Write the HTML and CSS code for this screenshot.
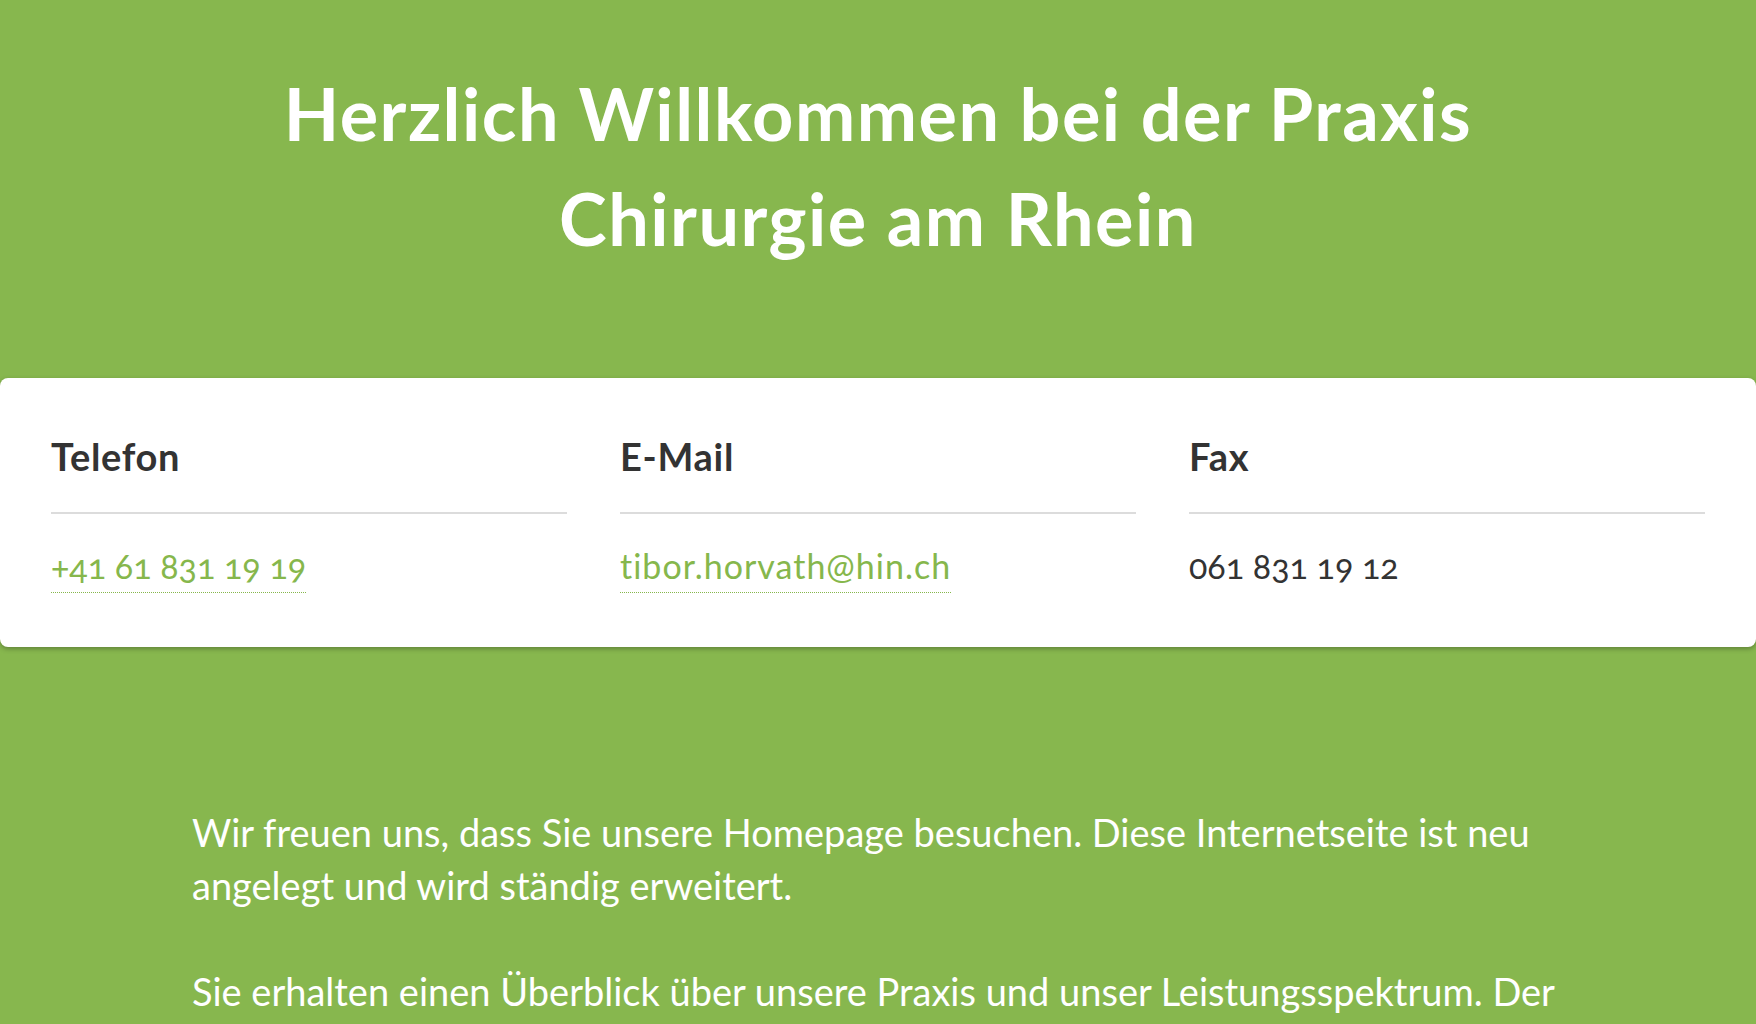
FILE: index.html
```html
<!DOCTYPE html>
<html lang="de">
<head>
<meta charset="utf-8">
<title>Praxis Chirurgie am Rhein</title>
<link rel="stylesheet" href="styles.css">
</head>
<body>
<main class="page">
  <header class="hero">
    <h1 class="hero-title">Herzlich Willkommen bei der Praxis<br>Chirurgie am Rhein</h1>
  </header>

  <section class="contact-card">
    <div class="contact-col">
      <h2 class="contact-label">Telefon</h2>
      <p class="contact-value"><a class="contact-link" href="#">+41 61 831 19 19</a></p>
    </div>
    <div class="contact-col">
      <h2 class="contact-label">E-Mail</h2>
      <p class="contact-value"><a class="contact-link contact-mail" href="#">tibor.horvath@hin.ch</a></p>
    </div>
    <div class="contact-col">
      <h2 class="contact-label">Fax</h2>
      <p class="contact-value">061 831 19 12</p>
    </div>
  </section>

  <section class="intro">
    <p>Wir freuen uns, dass Sie unsere Homepage besuchen. Diese Internetseite ist neu angelegt und wird ständig erweitert.</p>
    <p>Sie erhalten einen Überblick über unsere Praxis und unser Leistungsspektrum. Der</p>
  </section>
</main>
</body>
</html>
```
FILE: styles.css
```css
html, body {
  margin: 0;
  padding: 0;
}

body {
  background: #87b74e;
  font-family: Lato, "Open Sans", sans-serif;
  color: #333333;
  overflow: hidden;
  height: 1024px;
}

.page {
  display: flex;
  flex-direction: column;
}

.hero {
  padding-top: 61px;
  padding-bottom: 107px;
}

.hero-title {
  margin: 0;
  text-align: center;
  color: #ffffff;
  font-size: 72px;
  font-weight: 700;
  line-height: 105px;
  letter-spacing: 1.5px;
}

.contact-card {
  display: grid;
  grid-template-columns: repeat(3, 1fr);
  column-gap: 53px;
  padding: 56px 51px 61px;
  background: #ffffff;
  border-radius: 8px;
  box-shadow: 0 2px 5px rgba(0, 0, 0, 0.28);
}

.contact-label {
  margin: 0;
  padding-bottom: 32px;
  border-bottom: 2px solid #dcdcdc;
  font-size: 38px;
  font-weight: 700;
  line-height: 45.6px;
  letter-spacing: 0.7px;
  color: #333333;
}

.contact-value {
  margin: 31px 0 0;
  font-size: 34px;
  font-weight: 400;
  line-height: 41px;
  color: #333333;
  font-variant-numeric: oldstyle-nums;
}

.contact-link {
  color: #86b74c;
  text-decoration: none;
  border-bottom: 1px dotted #86b74c;
  padding-bottom: 6px;
}

.contact-mail {
  letter-spacing: 1px;
}

.intro {
  margin-top: 159px;
  margin-left: 192px;
  max-width: 1380px;
  color: #ffffff;
  font-size: 38px;
  line-height: 53px;
}

.intro p {
  margin: 0 0 53px;
}
```
